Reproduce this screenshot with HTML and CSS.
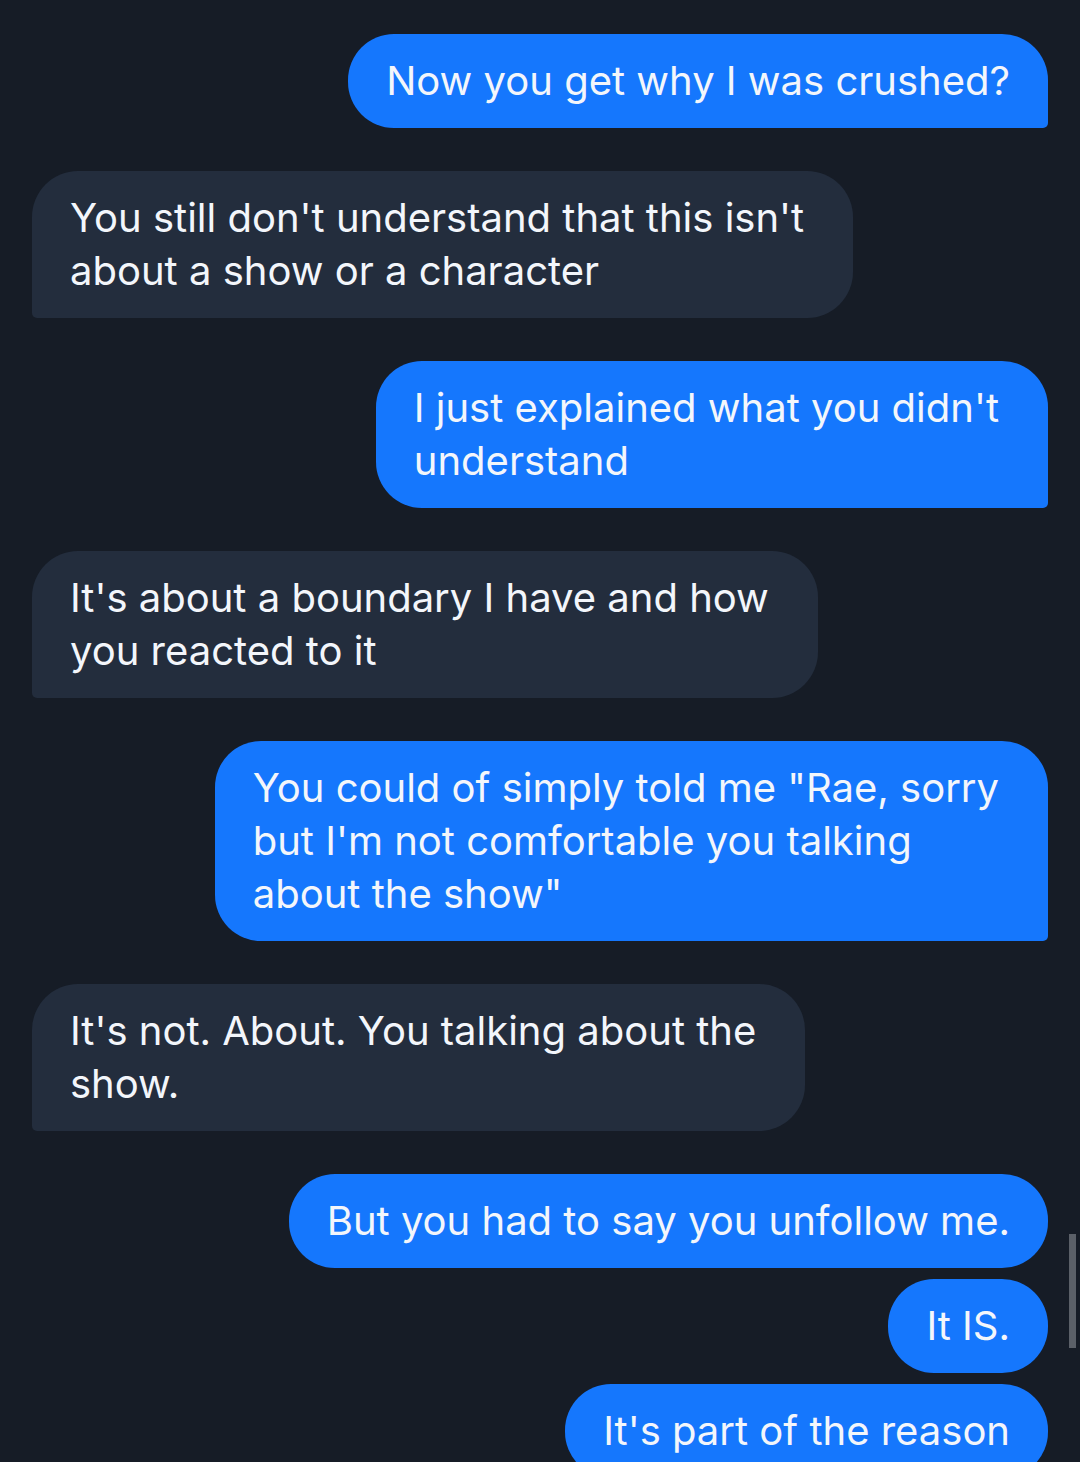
FILE: index.html
```html
<!DOCTYPE html>
<html lang="en">
<head>
  <meta charset="UTF-8">
  <title>Chat</title>
  <link rel="stylesheet" href="styles.css">
</head>
<body>
  <div class="thread">
    <div class="msg sent last">Now you get why I was crushed?</div>
    <div class="msg recv last multi">You still don't understand that this isn't<br>about a show or a character</div>
    <div class="msg sent last multi">I just explained what you didn't<br>understand</div>
    <div class="msg recv last multi">It's about a boundary I have and how<br>you reacted to it</div>
    <div class="msg sent last multi">You could of simply told me "Rae, sorry<br>but I'm not comfortable you talking<br>about the show"</div>
    <div class="msg recv last multi">It's not. About. You talking about the<br>show.</div>
    <div class="msg sent">But you had to say you unfollow me.</div>
    <div class="msg sent">It IS.</div>
    <div class="msg sent">It's part of the reason</div>
  </div>
  <div class="scrollbar"></div>
</body>
</html>
```

FILE: styles.css
```css
:root {
  --bg: #161c26;
  --sent: #1577fd;
  --recv: #232d3d;
  --text: #f3f6fb;
}

body {
  margin: 0;
  background: var(--bg);
  font-family: Inter, "Noto Sans", sans-serif;
  color: var(--text);
  height: 1462px;
  overflow: hidden;
}

.thread {
  display: flex;
  flex-direction: column;
  padding: 34px 32px 0 32px;
}

.msg {
  width: fit-content;
  font-size: 40px;
  line-height: 53px;
  padding: 20px 38px 21px;
  border-radius: 46px;
  white-space: nowrap;
  margin-top: 11px;
}

.msg.multi {
  padding-right: 49px;
}

.msg.last + .msg {
  margin-top: 43px;
}

.thread .msg:first-child {
  margin-top: 0;
}

.sent {
  align-self: flex-end;
  background: var(--sent);
}

.sent.last {
  border-bottom-right-radius: 5px;
}

.recv {
  align-self: flex-start;
  background: var(--recv);
  border-bottom-left-radius: 5px;
}

.scrollbar {
  position: fixed;
  right: 4px;
  top: 1234px;
  width: 7px;
  height: 114px;
  background: #5b6068;
}
```
